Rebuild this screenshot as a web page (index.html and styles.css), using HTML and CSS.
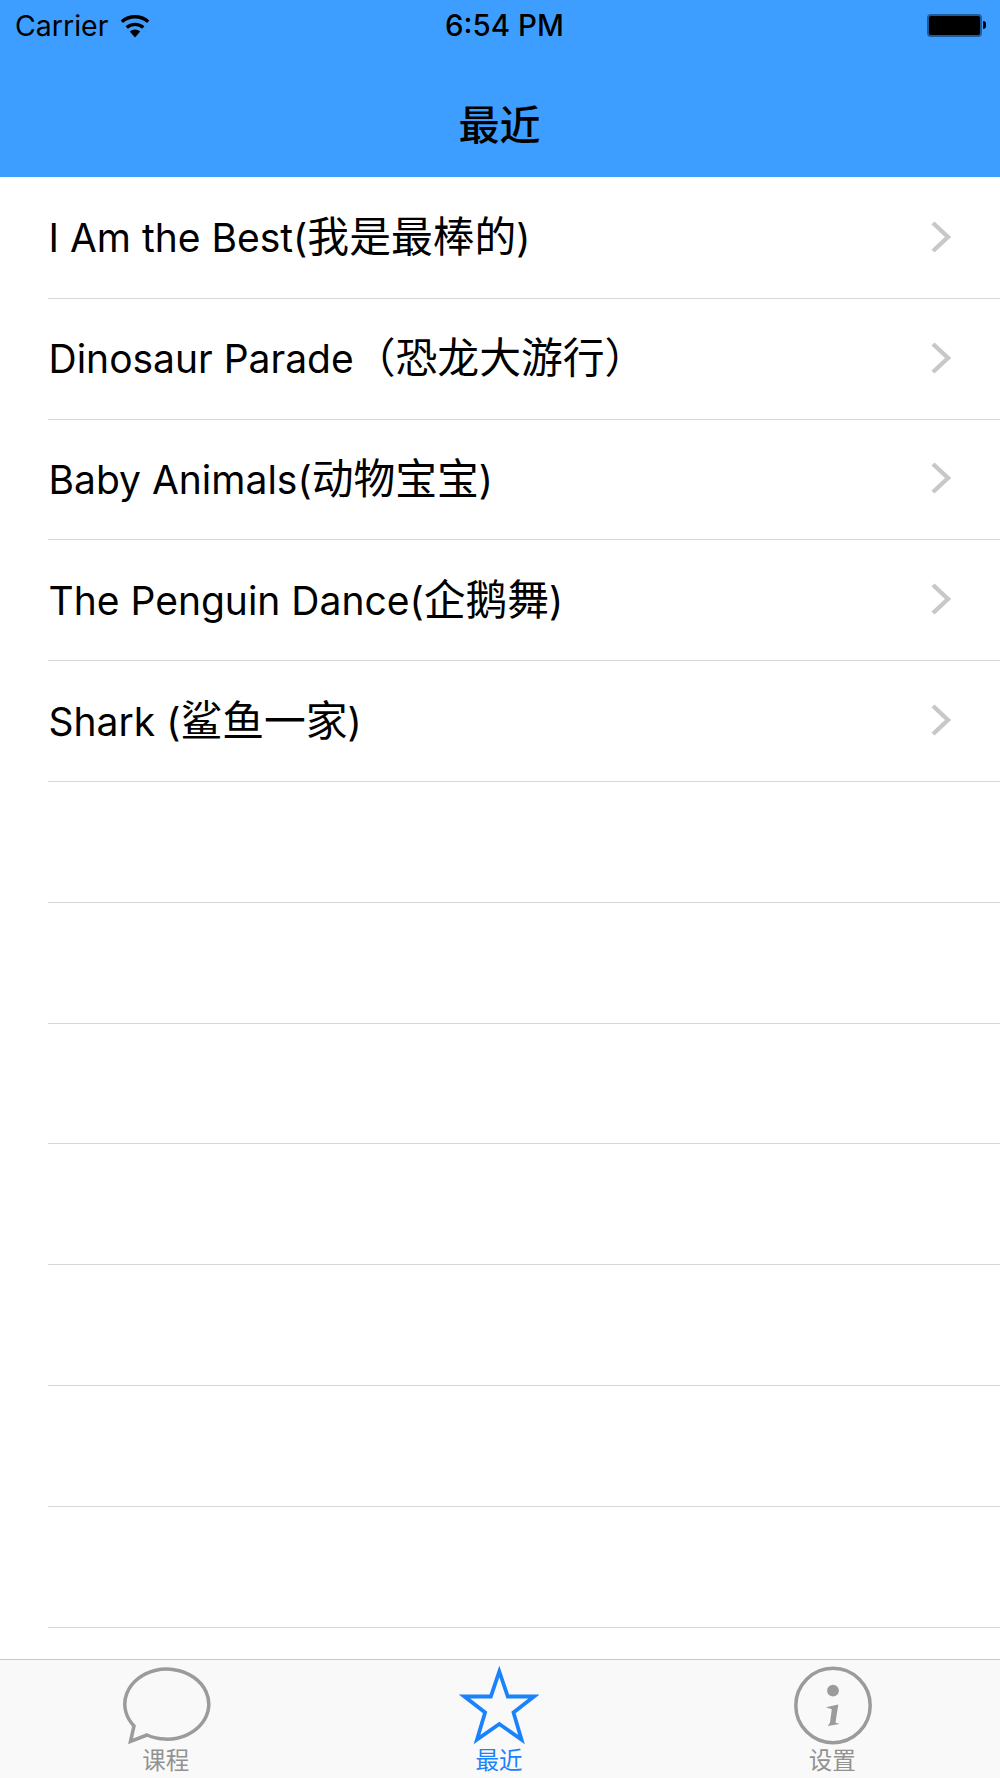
FILE: index.html
```html
<!DOCTYPE html>
<html lang="zh">
<head>
<meta charset="utf-8">
<title>最近</title>
<link rel="stylesheet" href="styles.css">
</head>
<body>
<div class="app">
  <header class="nav">
    <div class="status">
      <div class="status-left">
        <span class="carrier">Carrier</span>
        <svg class="wifi" width="30" height="25" viewBox="0 0 30 25"><path d="M15 24.500 9.800 18.400a8 8 0 0 1 10.400 0Z" fill="#000"/><path d="M6.700 14.500a12.600 12.600 0 0 1 16.600 0" fill="none" stroke="#000" stroke-width="3.400"/><path d="M1.800 8.800a19.800 19.800 0 0 1 26.400 0" fill="none" stroke="#000" stroke-width="3.400"/></svg>
      </div>
      <span class="time">6:54 PM</span>
      <div class="battery"><span class="battery-body"></span><span class="battery-cap"></span></div>
    </div>
    <h1 class="title">最近</h1>
  </header>
  <main class="list">
    <div class="row"><span class="label">I Am the Best(<span class="cjk">我是最棒的</span>)</span><svg class="chev" width="22" height="34" viewBox="0 0 22 34"><path d="M3 3 18 17 3 31" fill="none" stroke="#c7c7cc" stroke-width="4.400"/></svg></div>
    <div class="row"><span class="label">Dinosaur Parade<span class="cjk">（恐龙大游行）</span></span><svg class="chev" width="22" height="34" viewBox="0 0 22 34"><path d="M3 3 18 17 3 31" fill="none" stroke="#c7c7cc" stroke-width="4.400"/></svg></div>
    <div class="row"><span class="label">Baby Animals(<span class="cjk">动物宝宝</span>)</span><svg class="chev" width="22" height="34" viewBox="0 0 22 34"><path d="M3 3 18 17 3 31" fill="none" stroke="#c7c7cc" stroke-width="4.400"/></svg></div>
    <div class="row"><span class="label">The Penguin Dance(<span class="cjk">企鹅舞</span>)</span><svg class="chev" width="22" height="34" viewBox="0 0 22 34"><path d="M3 3 18 17 3 31" fill="none" stroke="#c7c7cc" stroke-width="4.400"/></svg></div>
    <div class="row"><span class="label">Shark (<span class="cjk">鲨鱼一家</span>)</span><svg class="chev" width="22" height="34" viewBox="0 0 22 34"><path d="M3 3 18 17 3 31" fill="none" stroke="#c7c7cc" stroke-width="4.400"/></svg></div>
    <div class="row"></div>
    <div class="row"></div>
    <div class="row"></div>
    <div class="row"></div>
    <div class="row"></div>
    <div class="row"></div>
    <div class="row"></div>
  </main>
  <nav class="tabs">
    <div class="tab">
      <svg class="tab-icon" width="90" height="80" viewBox="0 0 90 80"><path d="M13 60A42 35 0 1 1 26 69L9.500 75.500Z" fill="none" stroke="#9b9b9b" stroke-width="3.500"/></svg>
      <span class="tab-label">课程</span>
    </div>
    <div class="tab active">
      <svg class="tab-icon" width="80" height="80" viewBox="0 0 80 80"><path d="M40.300 5.500 48.800 30.500H75L54.500 46.500 62.500 73.500 40.300 58 18 73.500 26.100 46.500 5.500 30.500H31.800Z" fill="none" stroke="#1a82fb" stroke-width="3.800"/></svg>
      <span class="tab-label">最近</span>
    </div>
    <div class="tab">
      <svg class="tab-icon" width="80" height="80" viewBox="0 0 80 80"><circle cx="41" cy="39.500" r="37.200" fill="none" stroke="#9b9b9b" stroke-width="3.500"/><circle cx="41" cy="24.700" r="5.900" fill="#9b9b9b"/><path d="M33.800 41.300 46.300 38.500 43.500 56.500 47.500 58 35.800 60 38 56.500 39.800 43.300Z" fill="#9b9b9b"/></svg>
      <span class="tab-label">设置</span>
    </div>
  </nav>
</div>
</body>
</html>
```
FILE: styles.css
```css
* { box-sizing: border-box; }
html, body { margin: 0; padding: 0; }
body {
  background: #fff;
  color: #000;
  font-family: Inter, "Noto Sans CJK SC", sans-serif;
}
.app { width: 1000px; height: 1778px; display: flex; flex-direction: column; overflow: hidden; }
.nav { height: 177px; background: #3e9eff; display: flex; flex-direction: column; flex: none; }
.status { height: 50px; padding: 0 14px 0 15px; display: flex; align-items: center; justify-content: space-between; position: relative; }
.status-left { display: flex; align-items: center; gap: 12px; }
.carrier { font-size: 28.500px; font-weight: 400; }
.wifi { display: block; margin-top: 1px; }
.time { position: absolute; left: 445px; font-size: 29.500px; font-weight: 500; }
.battery { display: flex; align-items: center; }
.battery-body { display: block; width: 55px; height: 23px; background: #000; border: 2px solid #1e5b9c; border-radius: 4px; }
.battery-cap { display: block; width: 3px; height: 8px; background: #000; border-radius: 0 4px 4px 0; margin-left: 1px; }
.title { margin: 0; flex: 1; display: flex; align-items: center; justify-content: center; font-size: 41px; font-weight: 500; padding-top: 16px; padding-right: 1px; }
.list { flex: 1; overflow: hidden; background: #fff; padding-top: 1px; }
.row { height: 120.800px; margin-left: 48px; padding: 0 48px 2px 0; display: flex; align-items: center; justify-content: space-between; border-bottom: 1.500px solid #d6d6d8; }
.label { font-size: 39px; font-weight: 400; line-height: 50px; margin: 3px 0 0 0.500px; }
.cjk { font-size: 41.800px; line-height: 1; }
.chev { display: block; flex: none; }
.tabs { height: 119px; flex: none; background: #f9f9f9; border-top: 1.500px solid #c8c8c8; display: grid; grid-template-columns: repeat(3, 1fr); }
.tab { display: flex; flex-direction: column; align-items: center; color: #929292; padding: 6px 2px 0 0; }
.tab-icon { display: block; flex: none; }
.tab-label { font-size: 23.500px; line-height: 30px; }
.active { color: #1a82fb; }
```
